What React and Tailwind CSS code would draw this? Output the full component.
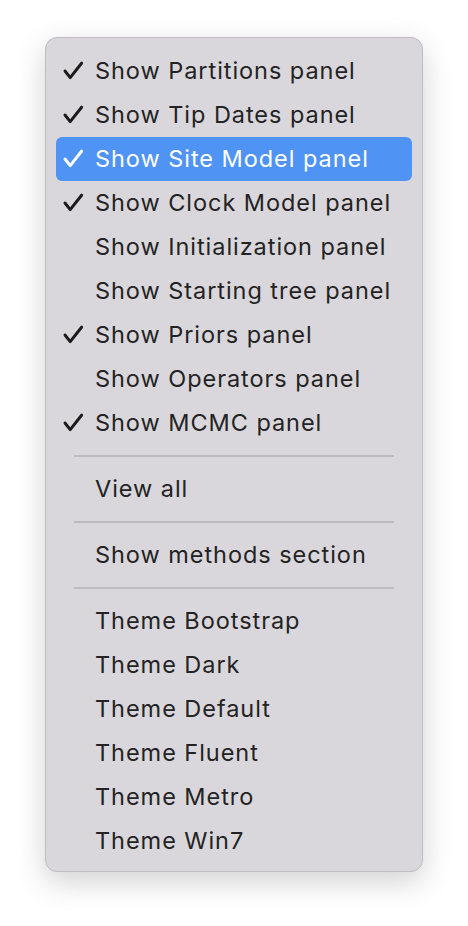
import React from "react";

const Check = ({ white }) => (
  <svg width="22" height="20" viewBox="0 0 22 20" className="block">
    <path d="M3 10 L8.2 16.6 L19.6 2.2" fill="none" stroke={white ? "#ffffff" : "#1c1c1c"} strokeWidth="3" strokeLinecap="round" strokeLinejoin="round" />
  </svg>
);

const Item = ({ label, checked, active }) => (
  <div className={`mx-[10px] flex h-[44px] items-center rounded-[6px] ${active ? "bg-[#4f93f4] text-white" : "text-[#232323]"}`}>
    <div className="flex w-[39px] pl-[6px]">{checked ? <Check white={active} /> : null}</div>
    <span className="text-[23.5px] leading-none tracking-[0.95px]">{label}</span>
  </div>
);

const Sep = () => (
  <div className="flex h-[22px] items-center px-[28px]">
    <div className="h-[2px] w-full bg-[#bdbbc0]" />
  </div>
);

export default function App() {
  const items = [
    ["Show Partitions panel", true],
    ["Show Tip Dates panel", true],
    ["Show Site Model panel", true, true],
    ["Show Clock Model panel", true],
    ["Show Initialization panel", false],
    ["Show Starting tree panel", false],
    ["Show Priors panel", true],
    ["Show Operators panel", false],
    ["Show MCMC panel", true],
  ];
  const themes = ["Theme Bootstrap", "Theme Dark", "Theme Default", "Theme Fluent", "Theme Metro", "Theme Win7"];
  return (
    <div className="h-[926px] w-[468px] bg-white pl-[45px] pt-[37px]" style={{ fontFamily: "Inter, 'Liberation Sans', sans-serif" }}>
      <div className="w-[378px] rounded-[12px] border border-[#bfbdc2] bg-[#d9d7dc] pb-[8px] pt-[11px] shadow-[0_10px_30px_rgba(0,0,0,0.18)]">
        {items.map(([l, c, a]) => (
          <Item key={l} label={l} checked={c} active={a} />
        ))}
        <Sep />
        <Item label="View all" />
        <Sep />
        <Item label="Show methods section" />
        <Sep />
        {themes.map((t) => (
          <Item key={t} label={t} />
        ))}
      </div>
    </div>
  );
}
